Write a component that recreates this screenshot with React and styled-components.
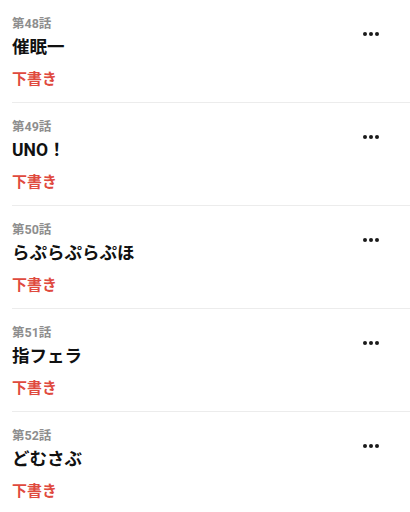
import React from 'react';
import styled, { createGlobalStyle } from 'styled-components';

const episodes = [
  { no: 48, title: '催眠一' },
  { no: 49, title: 'UNO！' },
  { no: 50, title: 'らぷらぷらぷほ' },
  { no: 51, title: '指フェラ' },
  { no: 52, title: 'どむさぶ' },
];

const GlobalStyle = createGlobalStyle`
  body {
    margin: 0;
    background: #fff;
    font-family: Roboto, "Noto Sans CJK JP", sans-serif;
  }
`;

const List = styled.ul`
  list-style: none;
  margin: 0;
  padding: 0;
`;

const Row = styled.li`
  display: flex;
  align-items: flex-start;
  margin-left: 12px;
  height: 102px;
  border-bottom: 1px solid #ececec;
`;

const Info = styled.div`
  flex: 1;
  display: flex;
  flex-direction: column;
  padding-top: 15px;
`;

const EpisodeNo = styled.span`
  font-size: 12.5px;
  line-height: 17px;
  font-weight: 700;
  color: #8e8e8e;
`;

const Title = styled.span`
  margin-top: 3px;
  font-size: 17.5px;
  line-height: 24px;
  font-weight: 700;
  color: #111;
`;

const Status = styled.span`
  margin-top: 10px;
  font-size: 15px;
  line-height: 20px;
  font-weight: 700;
  color: #df4a3e;
`;

const MoreButton = styled.button`
  display: flex;
  align-items: center;
  justify-content: center;
  width: 36px;
  height: 20px;
  margin: 24px 21px 0 0;
  padding: 0;
  border: none;
  background: none;
  cursor: pointer;
`;

const Dots = () => (
  <svg width="18" height="6" viewBox="0 0 18 6">
    <circle cx="3" cy="3" r="2" fill="#1a1a1a" />
    <circle cx="9" cy="3" r="2" fill="#1a1a1a" />
    <circle cx="15" cy="3" r="2" fill="#1a1a1a" />
  </svg>
);

const App = () => (
  <>
    <GlobalStyle />
    <List>
      {episodes.map((ep) => (
        <Row key={ep.no}>
          <Info>
            <EpisodeNo>第{ep.no}話</EpisodeNo>
            <Title>{ep.title}</Title>
            <Status>下書き</Status>
          </Info>
          <MoreButton aria-label="more">
            <Dots />
          </MoreButton>
        </Row>
      ))}
    </List>
  </>
);

export default App;
